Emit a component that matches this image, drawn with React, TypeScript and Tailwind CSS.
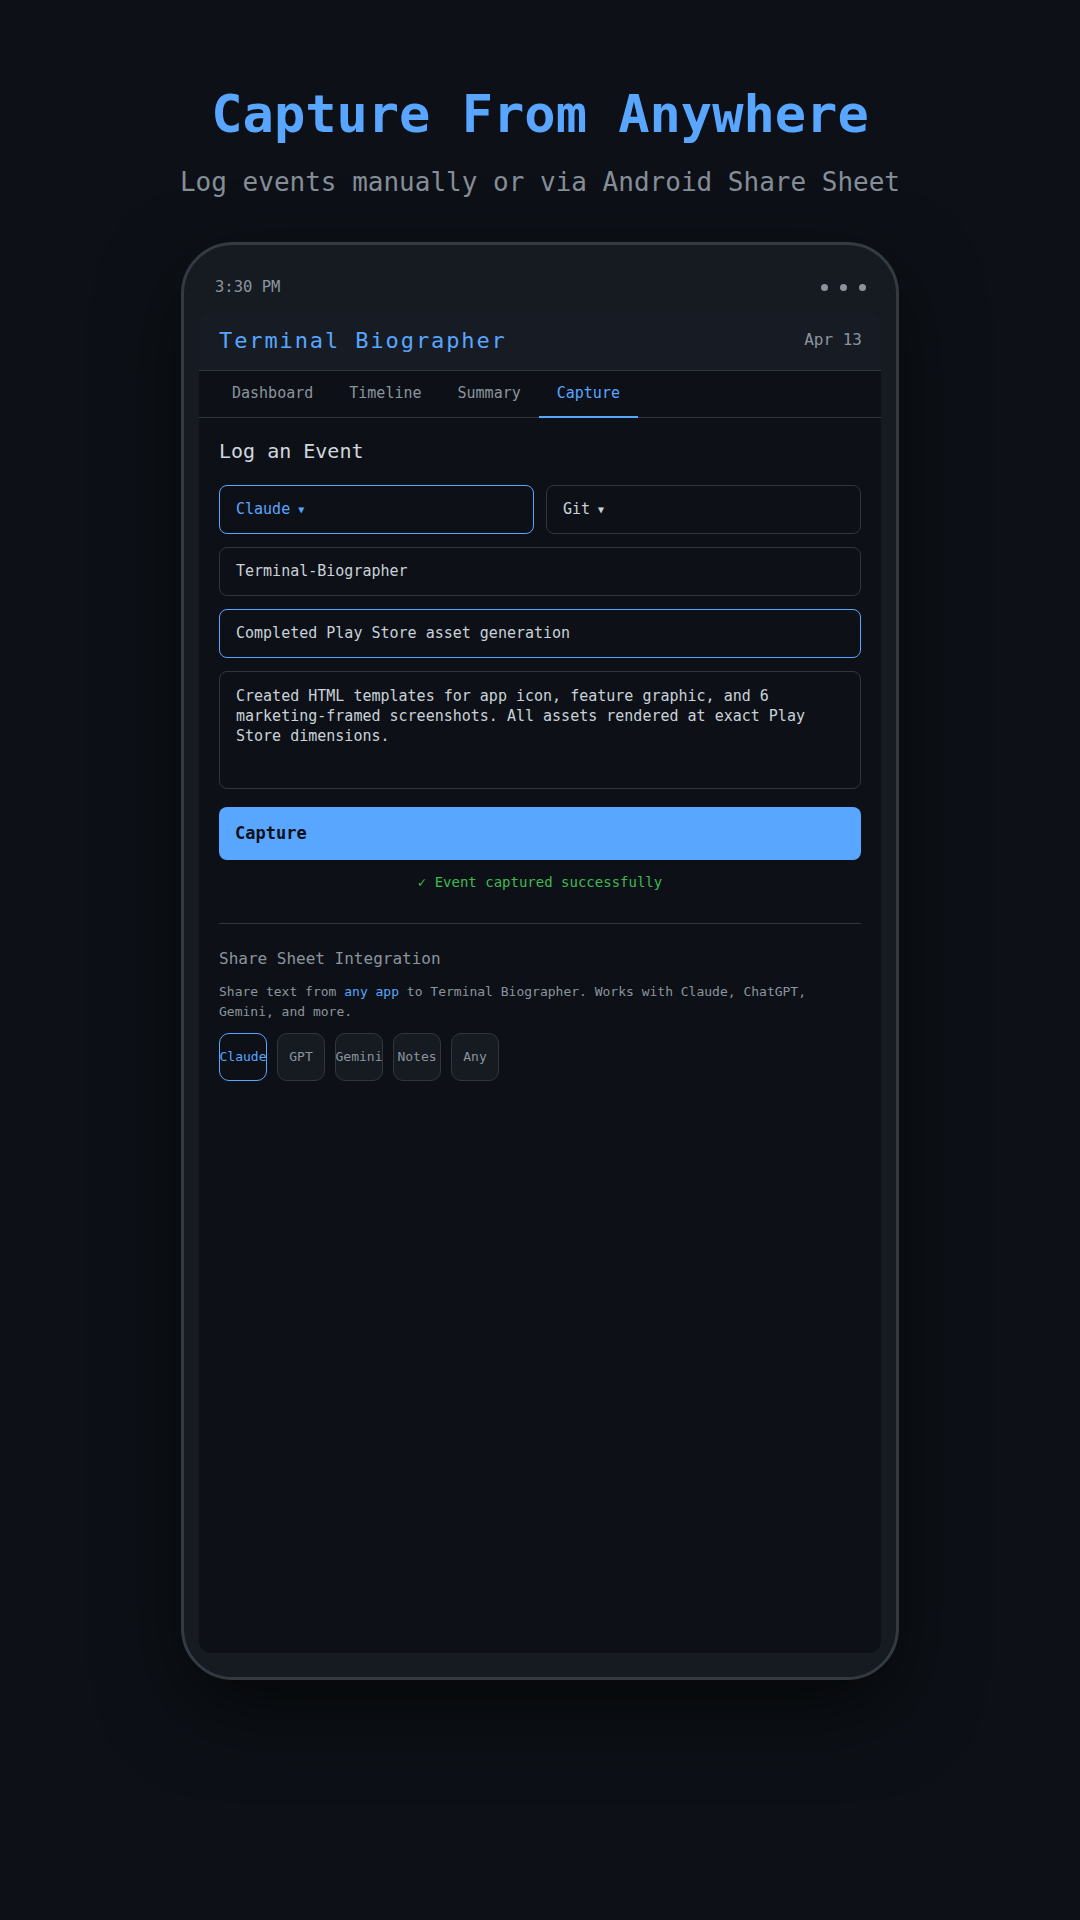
import React from 'react';

const mono = { fontFamily: '"DejaVu Sans Mono", "Liberation Mono", monospace' };

const tabs = ['Dashboard', 'Timeline', 'Summary', 'Capture'];
const chips = ['Claude', 'GPT', 'Gemini', 'Notes', 'Any'];

const StatusBar: React.FC = () => (
  <div className="h-[65px] flex items-center justify-between pt-[20px] pl-[16px] pr-[15px]">
    <span className="text-[15.5px] text-[#8b949e]">3:30 PM</span>
    <div className="flex items-center gap-[12px]">
      <span className="w-[7px] h-[7px] rounded-full bg-[#8b949e]" />
      <span className="w-[7px] h-[7px] rounded-full bg-[#8b949e]" />
      <span className="w-[7px] h-[7px] rounded-full bg-[#8b949e]" />
    </div>
  </div>
);

const SelectBox: React.FC<{ label: string; active?: boolean }> = ({ label, active }) => (
  <div
    className={`flex-1 h-[49px] flex items-center gap-[8px] px-4 rounded-lg border bg-[#0d1117] text-[15px] ${
      active ? 'border-[#58a6ff] text-[#58a6ff]' : 'border-[#30363d] text-[#c9d1d9]'
    }`}
  >
    <span>{label}</span>
    <span className="text-[10px]">▼</span>
  </div>
);

export default function App() {
  return (
    <div style={mono} className="min-h-[1920px] w-full bg-[#0d1117] flex flex-col items-center">
      <h1 className="mt-[83px] text-[52px] leading-[62px] font-bold text-[#58a6ff]">Capture From Anywhere</h1>
      <p className="mt-[21px] text-[26px] leading-[32px] text-[#868e98]">Log events manually or via Android Share Sheet</p>

      <div className="mt-[44px] w-[718px] h-[1438px] rounded-[52px] border-[3px] border-[#343a42] bg-[#161b22] px-[15px] pb-[24px] flex flex-col shadow-[0_30px_80px_rgba(0,0,0,0.6)]">
        <StatusBar />

        <div className="flex-1 rounded-xl overflow-hidden bg-[#0d1117] flex flex-col">
          {/* app header */}
          <div className="h-[61px] bg-[#171c24] border-b border-[#30363d] flex items-center justify-between pl-5 pr-[19px]">
            <span className="text-[22px] tracking-[1.9px] text-[#58a6ff]">Terminal Biographer</span>
            <span className="text-[16px] text-[#8b949e]">Apr 13</span>
          </div>

          {/* tabs */}
          <div className="h-[47px] border-b border-[#30363d] flex pl-[15px]">
            {tabs.map((t) => (
              <div
                key={t}
                className={`px-[18px] flex items-center text-[15px] -mb-px border-b-2 ${
                  t === 'Capture' ? 'text-[#58a6ff] border-[#58a6ff]' : 'text-[#8b949e] border-transparent'
                }`}
              >
                {t}
              </div>
            ))}
          </div>

          {/* capture form */}
          <div className="px-5 pt-[19px] flex flex-col">
            <h2 className="text-[20px] leading-[28px] text-[#d0d7de] mb-[20px]">Log an Event</h2>

            <div className="flex flex-col gap-[13px]">
              <div className="flex gap-[12px]">
                <SelectBox label="Claude" active />
                <SelectBox label="Git" />
              </div>
              <div className="h-[49px] flex items-center px-4 rounded-lg border border-[#30363d] text-[15px] text-[#c9d1d9]">
                Terminal-Biographer
              </div>
              <div className="h-[49px] flex items-center px-4 rounded-lg border border-[#58a6ff] text-[15px] text-[#c9d1d9]">
                Completed Play Store asset generation
              </div>
              <div className="h-[118px] px-4 py-[14px] rounded-lg border border-[#30363d] text-[15px] leading-[20px] text-[#c9d1d9]">
                Created HTML templates for app icon, feature graphic, and 6 marketing-framed screenshots. All assets rendered at exact Play Store dimensions.
              </div>
            </div>

            <button className="mt-[18px] h-[53px] w-full rounded-lg bg-[#58a6ff] text-left px-4 text-[17px] font-semibold text-[#0d1117]">
              Capture
            </button>

            <div className="mt-[12px] text-center text-[14px] leading-[20px] text-[#3fb950]">✓ Event captured successfully</div>

            <div className="mt-[31px] h-px bg-[#30363d]" />

            <h3 className="mt-[23px] text-[16px] leading-[24px] text-[#8b949e]">Share Sheet Integration</h3>
            <p className="mt-[11px] text-[13px] leading-[20px] text-[#8b949e]">
              Share text from <span className="text-[#58a6ff]">any app</span> to Terminal Biographer. Works with Claude, ChatGPT, Gemini, and more.
            </p>

            <div className="mt-[11px] flex gap-[10px]">
              {chips.map((c, i) => (
                <div
                  key={c}
                  className={`w-[48px] h-[48px] rounded-[10px] border flex items-center justify-center text-[13px] whitespace-nowrap ${
                    i === 0 ? 'border-[#58a6ff] bg-[#0d1117] text-[#58a6ff]' : 'border-[#30363d] bg-[#161b22] text-[#8b949e]'
                  }`}
                >
                  {c}
                </div>
              ))}
            </div>
          </div>
        </div>
      </div>
    </div>
  );
}
